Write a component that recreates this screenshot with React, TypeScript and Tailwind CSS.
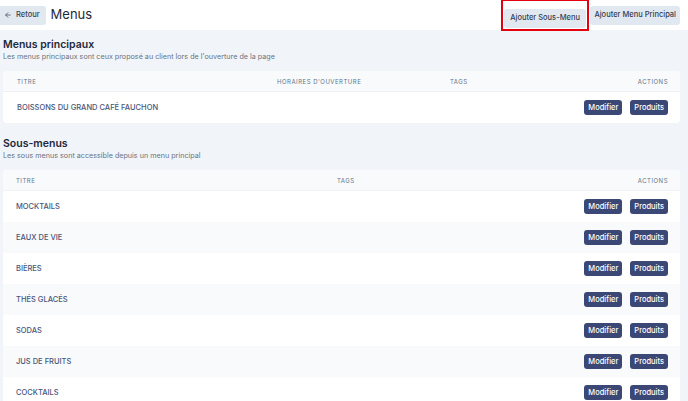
import { ArrowLeft } from "lucide-react";

const sousMenus = ["MOCKTAILS", "EAUX DE VIE", "BIÈRES", "THÉS GLACÉS", "SODAS", "JUS DE FRUITS", "COCKTAILS"];

function Actions() {
  return (
    <div className="flex justify-end gap-2">
      <button className="h-[15px] px-[4px] rounded-[3px] bg-[#3b4876] text-white text-[7.5px] font-medium leading-none">Modifier</button>
      <button className="h-[15px] px-[4px] rounded-[3px] bg-[#3b4876] text-white text-[7.5px] font-medium leading-none">Produits</button>
    </div>
  );
}

export default function App() {
  return (
    <div className="w-[688px] h-[401px] overflow-hidden bg-[#f1f5f9] text-[#1e293b]" style={{ fontFamily: "Inter, 'Noto Sans', sans-serif" }}>
      {/* Header */}
      <div className="h-[30px] bg-white flex items-center justify-between pr-[8px]">
        <div className="flex items-center gap-[5px]">
          <button className="h-[19px] pl-[4px] pr-[6px] rounded-r-[3px] bg-[#e2e8f0] flex items-center gap-[4px] text-[7.5px] font-medium text-[#334155]">
            <ArrowLeft className="w-[8px] h-[8px]" strokeWidth={2} />
            Retour
          </button>
          <h1 className="text-[13px] text-[#1e293b]">Menus</h1>
        </div>
        <div className="flex items-center gap-[1px]">
          <div className="border-2 border-[#e3000f] p-px">
            <button className="h-[19px] px-[6.5px] rounded-[3px] bg-[#e2e8f0] text-[7.5px] font-medium text-[#334155]">Ajouter Sous-Menu</button>
          </div>
          <button className="h-[19px] px-[4px] rounded-[3px] bg-[#e2e8f0] text-[7.5px] font-medium text-[#334155]">Ajouter Menu Principal</button>
        </div>
      </div>

      {/* Menus principaux */}
      <div className="pl-[3px] pr-[8px]">
        <h2 className="mt-[8px] text-[10.5px] font-semibold leading-[14px]">Menus principaux</h2>
        <p className="text-[7.2px] text-[#6b7280] leading-[10px]">Les menus principaux sont ceux proposé au client lors de l'ouverture de la page</p>
        <div className="mt-[9px] bg-white rounded-[4px] overflow-hidden">
          <div className="h-[21px] bg-[#f8fafc] border-b border-[#eef2f6] grid grid-cols-[260px_173px_1fr_auto] items-center pl-[14px] pr-[12px] text-[6px] tracking-[0.5px] text-[#64748b]">
            <span>TITRE</span>
            <span>HORAIRES D'OUVERTURE</span>
            <span>TAGS</span>
            <span>ACTIONS</span>
          </div>
          <div className="h-[31px] flex items-center justify-between pl-[14px] pr-[12px]">
            <span className="text-[7.5px] font-medium text-[#4a5577]">BOISSONS DU GRAND CAFÉ FAUCHON</span>
            <Actions />
          </div>
        </div>

        {/* Sous-menus */}
        <h2 className="mt-[14px] text-[10.5px] font-semibold leading-[14px]">Sous-menus</h2>
        <p className="text-[7.2px] text-[#6b7280] leading-[10px]">Les sous menus sont accessible depuis un menu principal</p>
        <div className="mt-[9px] bg-white rounded-t-[4px] overflow-hidden">
          <div className="h-[21px] bg-[#f8fafc] border-b border-[#eef2f6] grid grid-cols-[321px_1fr_auto] items-center pl-[13px] pr-[12px] text-[6px] tracking-[0.5px] text-[#64748b]">
            <span>TITRE</span>
            <span>TAGS</span>
            <span>ACTIONS</span>
          </div>
          {sousMenus.map((name, i) => (
            <div key={name} className={`h-[31px] flex items-center justify-between pl-[13px] pr-[12px] ${i % 2 === 1 ? "bg-[#f8fafc]" : "bg-white"}`}>
              <span className="text-[7.5px] font-medium text-[#4a5577]">{name}</span>
              <Actions />
            </div>
          ))}
        </div>
      </div>
    </div>
  );
}
